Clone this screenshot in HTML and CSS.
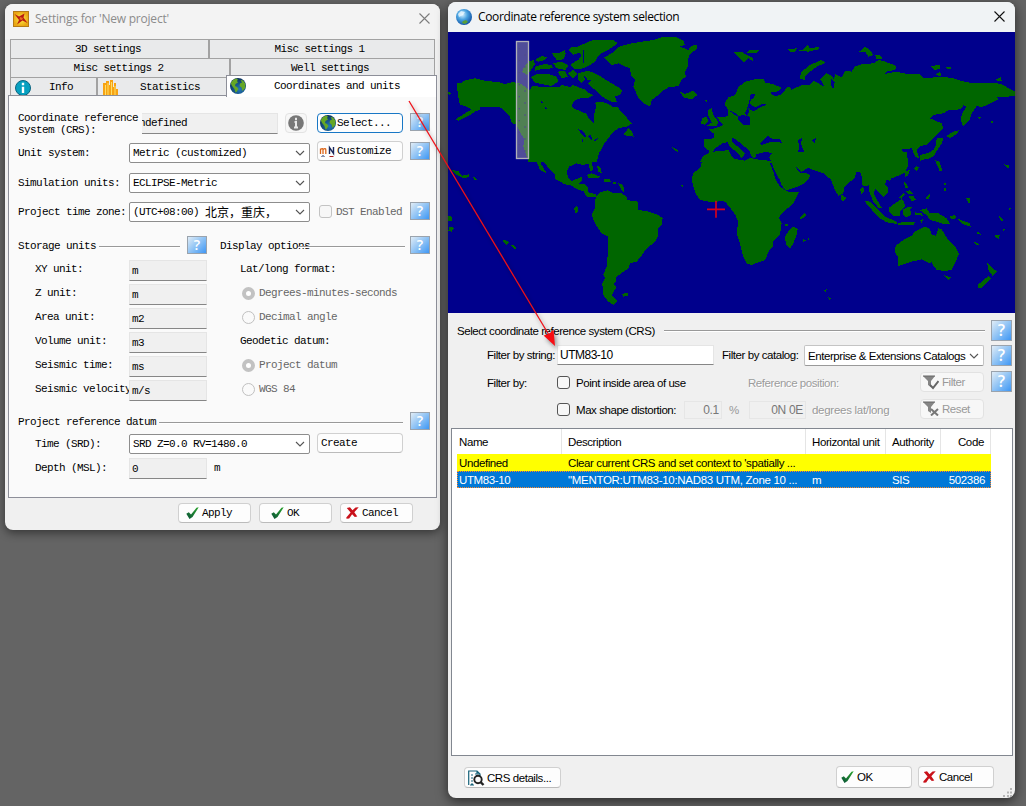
FILE: index.html
```html
<!DOCTYPE html>
<html lang="en">
<head>
<meta charset="utf-8">
<title>Coordinate settings</title>
<link rel="stylesheet" href="styles.css">
</head>
<body>
<svg class="defs" width="0" height="0">
  <defs>
    <radialGradient id="sea" cx=".6" cy=".7" r=".8"><stop offset="0" stop-color="#2479b8"/><stop offset="1" stop-color="#06264d"/></radialGradient>
    <linearGradient id="ok" x1="0" y1="1" x2="1" y2="0"><stop offset="0" stop-color="#0a5138"/><stop offset="1" stop-color="#2aa52c"/></linearGradient>
    <radialGradient id="sky" cx=".4" cy=".35" r=".7"><stop offset="0" stop-color="#d5f1ff"/><stop offset=".45" stop-color="#4aa3e0"/><stop offset="1" stop-color="#0a4ba0"/></radialGradient>
    <radialGradient id="gold"><stop offset="0" stop-color="#fff04a"/><stop offset="1" stop-color="#e9a512"/></radialGradient>
  </defs>
  <symbol id="globe" viewBox="0 0 16 16"><circle cx="8" cy="8" r="8" fill="url(#sea)"/><path d="M.8 5 3 2 6 .6 8 1.500 7 3 8 4.500 5.500 6 5 8 7 9 8.500 11 6.500 14 5.500 14.500 4.500 11 2.500 8.500 1.500 7ZM10.500 2 13 2.500 15.200 5.500 15.300 10 12.500 13 11.500 9.500 9.500 8 10 5.500 12 4.500Z" fill="#65a725"/></symbol>
  <symbol id="check" viewBox="0 0 13 12"><path d="M.3 6.800 2.800 5.300 5 7.500 10.500 .8 12.700 .3 6.500 10 3.500 11.900Z" fill="url(#ok)"/></symbol>
  <symbol id="cross" viewBox="0 0 13 12"><path d="M.8 1 4 .2 6.500 3.300 9.500 .5 12.700 .3 8.300 5.200 11.300 9.600 8.800 10 6.100 7.300 3.200 11.600 .5 11.800 .3 10.500 4.600 5.600Z" fill="#c9111a"/></symbol>
  <symbol id="chev" viewBox="0 0 10 6"><path d="M1 1 5 5 9 1" fill="none" stroke="#555" stroke-width="1.1"/></symbol>
  <symbol id="funnel" viewBox="0 0 16 15"><path d="M0 1H12L8 6V12L5 10V6Z" fill="#858585"/><path d="M0 1H12" stroke="#666"/></symbol>
</svg>

<section class="window settings">
  <header class="title">
    <svg width="16" height="16" viewBox="0 0 16 16"><rect x=".5" y=".5" width="15" height="15" fill="url(#gold)" stroke="#b67b16"/><path d="M1.500 3 6 5.500 11.500 2.500 10.500 6.500 14.500 12 9.500 9.500 4 13.500 6 9Z" fill="#b91b10"/><path d="M7 6 10 7 9 9 6.500 8.500Z" fill="#e66a20"/></svg>
    <span>Settings for 'New project'</span>
    <svg class="close" width="11" height="11" viewBox="0 0 11 11"><path d="M.5.5 10.500 10.500M10.500.5.5 10.500" stroke="#7c7c7c" stroke-width="1.100"/></svg>
  </header>

  <nav class="tabs">
    <div class="tabrow one"><span>3D settings</span><span>Misc settings 1</span></div>
    <div class="tabrow two"><span>Misc settings 2</span><span>Well settings</span></div>
    <div class="tabrow three">
      <div class="tab info"><svg width="16" height="16" viewBox="0 0 16 16"><circle cx="8" cy="8" r="7.500" fill="#07a0c0" stroke="#0a6480"/><path d="M8 2.700V5.300M8 6.800V13" stroke="#fff" stroke-width="2.400"/></svg><span>Info</span></div>
      <div class="tab stats"><svg width="16" height="16" viewBox="0 0 16 16"><path d="M0 3H3V1H6V5H7V0H10V7H11V3H13V9H15V16H0Z" fill="#f7a313"/><path d="M2.500 5V15M5 3V15M8.500 2V15M12 6V15" stroke="#ffdf64"/></svg><span>Statistics</span></div>
      <div class="tab active"><svg width="16" height="16"><use href="#globe"/></svg><span>Coordinates and units</span></div>
    </div>
  </nav>

  <main class="panel">
    <div class="line crs">
      <label>Coordinate reference<br>system (CRS):</label>
      <div class="field"><span>Undefined</span></div>
      <button class="infobtn" disabled><svg width="16" height="16" viewBox="0 0 16 16"><circle cx="8" cy="8" r="7.800" fill="#777"/><path d="M8 2.700V5.300M6.500 7H8V12M6 12.500H10" stroke="#e8e8e8" stroke-width="2" fill="none"/></svg></button>
      <button class="btn select"><svg width="16" height="16"><use href="#globe"/></svg>Select...</button>
      <i class="help">?</i>
    </div>
    <div class="line units">
      <label>Unit system:</label>
      <div class="combo">Metric (customized)<svg width="10" height="6"><use href="#chev"/></svg></div>
      <button class="btn customize"><svg width="16" height="12" viewBox="0 0 16 12"><path d="M1.500 9V3.500M1.500 4.500Q4 2.500 4 5V9M4 4.500Q6.800 2.500 6.800 5V9" stroke="#dc6518" stroke-width="1.300" fill="none"/><path d="M10.500 9V2.500L14.500 8.500V2" stroke="#19285c" stroke-width="1.400" fill="none"/><path d="M2.500 11.500Q4 10 5.500 11.500" stroke="#19285c" fill="none"/><path d="M10.500 11.500H14.500" stroke="#a81e1e"/></svg>Customize</button>
      <i class="help">?</i>
    </div>
    <div class="line sim">
      <label>Simulation units:</label>
      <div class="combo">ECLIPSE-Metric<svg width="10" height="6"><use href="#chev"/></svg></div>
    </div>
    <div class="line zone">
      <label>Project time zone:</label>
      <div class="combo">(UTC+08:00) <b>北京，重庆，</b><svg width="10" height="6"><use href="#chev"/></svg></div>
      <i class="box off"></i><span class="dst">DST Enabled</span>
      <i class="help">?</i>
    </div>

    <div class="groups">
      <section class="storage">
        <h2><span>Storage units</span><hr><i class="help">?</i></h2>
        <div class="unit"><label>XY unit:</label><div class="field">m</div></div>
        <div class="unit"><label>Z unit:</label><div class="field">m</div></div>
        <div class="unit"><label>Area unit:</label><div class="field">m2</div></div>
        <div class="unit"><label>Volume unit:</label><div class="field">m3</div></div>
        <div class="unit"><label>Seismic time:</label><div class="field">ms</div></div>
        <div class="unit"><label>Seismic velocity</label><div class="field">m/s</div></div>
      </section>
      <section class="display">
        <h2><span>Display options</span><hr><i class="help">?</i></h2>
        <p>Lat/long format:</p>
        <p class="opt"><i class="radio on"></i>Degrees-minutes-seconds</p>
        <p class="opt"><i class="radio"></i>Decimal angle</p>
        <p>Geodetic datum:</p>
        <p class="opt"><i class="radio on"></i>Project datum</p>
        <p class="opt"><i class="radio"></i>WGS 84</p>
      </section>
    </div>

    <section class="datum">
      <h2><span>Project reference datum</span><hr><i class="help">?</i></h2>
      <div class="line time"><label>Time (SRD):</label><div class="combo">SRD Z=0.0 RV=1480.0<svg width="10" height="6"><use href="#chev"/></svg></div><button class="btn create">Create</button></div>
      <div class="line depth"><label>Depth (MSL):</label><div class="field">0</div><span>m</span></div>
    </section>
  </main>

  <footer class="actions">
    <button class="btn"><svg width="13" height="12"><use href="#check"/></svg>Apply</button>
    <button class="btn"><svg width="13" height="12"><use href="#check"/></svg>OK</button>
    <button class="btn"><svg width="13" height="12"><use href="#cross"/></svg>Cancel</button>
  </footer>
</section>

<section class="window selection">
  <header class="title">
    <svg width="16" height="16" viewBox="0 0 16 16"><circle cx="8" cy="8" r="8" fill="url(#sky)"/><path d="M7 12 10 11 12 13 9 15 6 14Z" fill="#59a036"/><path d="M2 5 5 2 9 3 7 6 3 8Z" fill="#eefaff" opacity=".75"/></svg>
    <span>Coordinate reference system selection</span>
    <svg class="close" width="11" height="11" viewBox="0 0 11 11"><path d="M.5.5 10.500 10.500M10.500.5.5 10.500" stroke="#111" stroke-width="1.100"/></svg>
  </header>
  <svg class="map" width="567" height="281" viewBox="1344 96 1701 843">
    <g class="land" shape-rendering="crispEdges">
      <g transform="translate(1335 0)">
        <path d="M36 262 36 250 50 248 60 241 90 235 125 243 160 246 180 252 205 246 230 252 245 265 255 270 262 258 285 260 300 262 340 262 350 255 365 258 372 262 385 255 400 262 420 268 430 278 445 285 435 292 415 295 398 296 385 306 380 320 392 328 410 335 425 342 430 352 440 364 448 370 446 350 450 335 453 318 450 308 470 305 490 312 505 322 518 320 525 332 540 345 550 360 562 370 545 380 520 385 500 400 490 415 478 430 470 445 462 460 455 485 250 485 243 462 235 440 238 420 225 395 215 375 200 368 195 350 175 328 160 320 130 320 105 322 105 330 90 335 75 345 60 352 40 362 32 358 60 340 80 328 60 318 45 315 40 290Z"/>
        <path d="M258 232 275 222 310 222 335 230 340 245 320 258 290 252 270 248ZM245 225 232 215 235 205 250 185 265 180 270 192 258 210ZM270 200 300 192 320 195 325 205 290 207 270 212ZM270 180 290 168 305 172 300 180 280 185ZM320 160 340 160 360 150 362 162 355 178 335 180ZM325 190 350 185 370 195 362 210 335 205ZM338 215 360 212 368 230 350 235ZM370 150 378 142 395 142 430 125 445 120 505 120 518 130 490 150 470 160 455 175 450 185 430 198 405 208 385 205 375 195 385 188 400 180 410 165 400 158 385 165ZM368 220 385 210 398 222 385 235ZM400 220 430 212 460 225 480 238 500 250 520 262 532 272 525 285 510 290 515 305 500 305 480 295 465 285 455 272 440 262 430 250 440 240 420 240 410 248 400 240ZM535 405 550 385 560 395 567 410 550 408Z"/>
        <path d="M478 172 500 160 522 140 550 132 590 125 625 120 650 112 695 112 715 122 720 135 705 140 730 150 740 137 755 135 758 145 735 162 728 180 728 200 720 215 722 230 710 240 700 258 670 262 650 275 640 285 620 300 615 320 600 312 580 295 572 275 565 260 570 240 558 225 555 205 540 200 520 190 500 195 485 182Z"/>
        <path d="M705 275 720 282 745 272 757 285 740 298 715 292ZM778 300 787 300 785 308ZM790 330 800 325 805 345 820 365 815 378 785 378 800 368 795 355 788 345ZM772 355 785 350 790 362 780 375 768 370ZM870 288 845 298 838 312 850 330 870 335ZM790 388 810 385 835 375 815 352 840 352 870 335 870 430 850 425 835 430 820 445 800 455 785 448 778 440 778 418 805 415 808 402ZM682 442 700 450 700 456 690 452ZM775 468 790 460 830 452 870 450 870 485 765 485ZM9 275 20 280 12 287Z"/>
      </g>
      <g transform="translate(2190 0)">
        <path d="M-5 292 15 285 25 262 45 245 75 238 100 236 105 248 130 252 155 264 145 274 120 278 135 290 150 285 162 275 170 262 180 260 184 270 215 255 240 255 250 242 265 250 285 262 275 245 270 240 290 220 305 228 312 240 315 222 335 232 345 212 365 215 375 200 395 193 430 190 445 180 460 183 500 198 495 210 470 215 465 222 500 215 530 222 570 222 580 235 640 230 670 235 690 242 720 248 755 250 795 248 820 255 835 265 855 275 855 288 830 290 800 290 805 298 785 308 755 322 740 318 735 325 725 340 718 360 700 380 692 360 695 345 700 335 710 320 700 315 695 325 680 330 655 330 640 340 610 345 600 355 635 370 640 385 625 400 605 420 590 435 570 438 560 450 568 475 555 470 545 445 515 448 525 465 535 490 -5 490Z"/>
        <path d="M10 155 35 155 50 165 70 175 68 183 55 175 42 186 28 175ZM60 150 88 150 80 160 50 158ZM172 148 200 145 195 155 180 155ZM205 152 220 148 232 135 240 145 268 140 265 148 235 155ZM208 235 215 215 240 195 275 180 287 188 260 200 240 215 225 228 225 240ZM388 155 405 140 420 150 430 165 415 170 405 155ZM435 165 450 165 458 178 440 178ZM600 198 630 195 632 205 615 210ZM615 225 630 215 635 228ZM648 200 662 200 662 207 650 206ZM798 238 812 232 815 242 803 242ZM650 408 670 395 688 390 680 402 660 415ZM620 415 640 415 635 430 625 445 610 470 590 478 575 475 590 462 610 450 618 435ZM740 350 752 352 750 358ZM782 363 788 363 788 368 782 368Z"/>
      </g>
      <g transform="translate(1335 465)">
        <path d="M253 0 275 20 285 45 305 55 290 30 285 15 300 25 315 45 330 58 330 72 360 88 380 92 400 105 415 108 425 125 455 125 452 117 430 112 428 95 420 88 400 88 412 75 410 65 395 72 380 78 370 70 365 50 372 35 395 25 415 30 430 25 437 50 445 42 440 22 455 5 462 -12 250 -12Z"/>
        <path d="M452 125 465 112 488 106 505 115 530 115 545 125 545 135 578 140 580 165 605 168 640 180 653 190 650 210 638 220 640 240 630 260 600 285 595 295 575 320 555 325 550 340 515 365 512 380 505 388 515 395 500 420 517 438 505 450 490 440 475 420 472 385 480 370 475 358 485 335 488 300 490 245 470 235 450 205 440 180 450 160Z"/>
        <path d="M530 417 550 413 550 422 535 425ZM425 60 440 55 465 65 460 70 430 68ZM475 72 495 72 497 80 478 80ZM503 82 513 82 513 88 503 88ZM520 85 535 90 538 115 530 105ZM455 30 468 40 470 55 460 50ZM387 160 397 152 400 170 392 175ZM706 92 715 88 715 98ZM20 45 40 48 50 62 72 58 72 66 55 70 35 60ZM80 60 98 75 90 76ZM9 183 22 185 20 197 9 198ZM12 215 27 218 20 230 10 227ZM172 258 180 254 192 262 185 270ZM197 272 205 270 215 280 210 285Z"/>
      </g>
      <g transform="translate(2190 465)">
        <path d="M125 -10 530 -10 535 30 525 52 505 62 485 70 470 75 465 90 475 100 475 112 460 125 445 110 435 100 432 118 450 150 458 160 445 158 430 140 418 110 418 90 408 95 395 90 395 65 390 50 378 50 375 68 355 85 342 98 340 115 325 122 315 105 305 80 300 70 290 65 280 55 250 45 235 38 215 50 195 32 205 48 215 55 230 55 242 62 230 78 215 90 180 103 165 105 155 90 150 75 135 50 125 25Z"/>
        <path d="M-65 0-85 20-87 35-110 55-115 70-110 95-103 115-90 135-55 142-25 138-15 140 0 158 15 178 25 200 20 235 30 265 38 300 50 325 65 330 85 322 105 315 118 285 130 275 128 260 150 240 155 205 148 190 150 180 190 145 207 112 180 112 165 105 150 95 135 70 130 50 115 15 80 12 60 8 45 16 20 12 15 0-60-15Z"/>
        <path d="M335 118 350 130 340 140 333 132ZM168 270 165 245 175 230 190 215 203 222 200 240 190 265 180 280ZM208 190 225 173 228 182 215 192ZM165 206 175 206 175 213 165 213ZM218 252 228 256 220 262ZM232 248 238 248 235 256ZM403 138 420 140 440 160 465 185 500 200 500 207 470 202 450 190 430 170ZM505 203 555 200 550 210 505 210ZM477 158 495 145 515 132 522 140 525 155 510 170 510 182 490 182 478 172ZM518 165 535 155 550 155 540 165 545 178 530 187 520 180ZM522 80 532 90 535 100 525 100ZM535 122 550 122 558 135 545 138ZM508 128 520 115 524 118 514 132ZM527 108 540 106 550 116 535 118ZM525 50 540 45 535 60 525 68ZM553 40 560 34 567 38 560 48ZM570 0 610 -10 600 8 570 18ZM615 15 628 20 637 45 630 50ZM568 165 590 160 600 175 625 175 650 190 662 208 645 208 620 200 600 195 590 180ZM555 172 575 175 578 182 555 180ZM570 195 580 193 575 205ZM658 185 675 180 680 190 665 192ZM680 190 720 205 722 215 700 208ZM470 70 483 68 480 80ZM390 105 400 95 403 110 395 118Z"/>
        <path d="M495 290 497 272 520 255 545 242 555 230 585 215 600 222 605 238 618 242 625 220 635 222 645 240 655 255 675 275 687 295 675 325 665 345 645 348 620 345 605 325 610 318 600 325 575 313 545 320 505 333 503 305ZM640 360 662 367 655 376ZM772 325 790 342 802 348 788 363 775 345ZM775 363 785 370 770 385 755 398 745 398 745 388ZM585 130 600 115 598 132ZM708 130 720 130 718 150ZM835 158 843 158 840 168ZM805 185 810 183 820 195 815 200ZM792 242 810 240 805 252ZM740 235 745 230 755 240ZM730 258 748 268 740 272ZM822 28 838 32 835 40ZM280 405 290 403 288 411ZM292 425 303 430 300 436ZM643 83 648 83 648 90 643 90ZM643 100 648 100 648 107 643 107ZM817 222 825 222 822 230Z"/>
      </g>
      <g class="water">
        <path transform="translate(1335 0)" d="M400 388 410 390 425 408 422 412 408 402ZM411 410 415 425 411 425ZM428 408 438 405 443 420 436 418ZM445 422 460 412 460 417 448 424ZM288 303 296 307 290 309ZM300 322 310 324 302 327ZM414 150 418 150 418 190 414 190ZM417 225 427 238 420 240ZM435 262 452 275 445 280Z"/>
        <path transform="translate(2190 0)" d="M24 350 38 345 60 350 60 376 40 375 26 362ZM-5 330 15 345 24 350 22 342ZM62 283 75 282 72 292 62 300 60 312 75 322 95 312 112 314 95 320 70 334 55 325 58 335 50 350 45 340 55 315ZM90 430 115 407 128 418 150 418 155 428 125 425 95 435ZM203 420 217 414 212 430 222 455 205 455 208 435ZM245 422 258 413 254 430ZM302 235 314 245 312 265 305 262ZM-45 445-20 428-5 432 5 445 20 455 35 475 45 460 30 445 5 425 8 412 30 428 58 452 65 470 75 475 80 462 110 455 125 460 118 472 122 482 115 482 80 478 60 474 45 482 15 477 5 468-5 450-50 455Z"/>
      </g>
    </g>
    <path class="mesh" d="M1558 144V450M1575 163V465"/>
    <rect class="zonebar" x="1549.500" y="124.500" width="36" height="351"/>
    <path class="target" d="M2121 628H2175M2148 602V653"/>
  </svg>

  <div class="filters">
    <div class="frow head"><span>Select coordinate reference system (CRS)</span><hr><i class="help">?</i></div>
    <div class="frow string"><label>Filter by string:</label><div class="field">UTM83-10</div><label class="cat">Filter by catalog:</label><div class="combo">Enterprise &amp; Extensions Catalogs<svg width="10" height="6"><use href="#chev"/></svg></div><i class="help">?</i></div>
    <div class="frow area"><label>Filter by:</label><i class="box"></i><span class="name">Point inside area of use</span><span class="pos">Reference position:</span><button class="btn off"><svg width="16" height="15" viewBox="0 0 16 15"><use href="#funnel"/><path d="M7 10 10 13 15.500 6" fill="none" stroke="#666" stroke-width="2"/></svg>Filter</button><i class="help">?</i></div>
    <div class="frow shape"><i class="box"></i><span class="name">Max shape distortion:</span><div class="field dist">0.1</div><span class="pct">%</span><div class="field where">0N 0E</div><span class="deg">degrees lat/long</span><button class="btn off"><svg width="16" height="15" viewBox="0 0 16 15"><use href="#funnel"/><path d="M8 8 15 14.500M15 8 8 14.500" stroke="#777" stroke-width="2"/></svg>Reset</button></div>
  </div>

  <div class="list">
    <div class="cols names"><span>Name</span><span>Description</span><span>Horizontal unit</span><span>Authority</span><span>Code</span></div>
    <div class="cols undef"><span>Undefined</span><span>Clear current CRS and set context to 'spatially ...</span><span></span><span></span><span></span></div>
    <div class="cols picked"><span>UTM83-10</span><span>"MENTOR:UTM83-10:NAD83 UTM, Zone 10 ...</span><span>m</span><span>SIS</span><span>502386</span></div>
  </div>

  <footer class="bottom">
    <button class="btn details"><svg width="17" height="16" viewBox="0 0 17 16"><path d="M.7 15V1H9L12 4V6M3 5H5M3 8H5M3 11H5M3 14H5M7 4H9M9 1V4H12M2 15H6" fill="none" stroke="#17637a" stroke-width="1.200"/><circle cx="10" cy="9.500" r="3.700" fill="#f9f9f9" stroke="#222" stroke-width="1.900"/><path d="M12.500 12 15.500 15" stroke="#222" stroke-width="2.400"/></svg>CRS details...</button>
    <button class="btn ok"><svg width="13" height="12"><use href="#check"/></svg>OK</button>
    <button class="btn cancel"><svg width="13" height="12"><use href="#cross"/></svg>Cancel</button>
    <svg class="grip" width="10" height="10" viewBox="0 0 10 10"><path d="M7 0H9V2H7ZM4 3.500H6V5.500H4ZM7 3.500H9V5.500H7ZM0 7H2V9H0ZM4 7H6V9H4ZM7 7H9V9H7Z" fill="#b5b5b5"/></svg>
  </footer>
</section>

<svg class="arrow" width="160" height="256" viewBox="402 96 160 256"><path d="M409 101 549 335" stroke="#f01018" stroke-width="1.300"/><path d="M555 346 543.500 335.500 549 334 553.500 329.500Z" fill="#f80c12"/></svg>
</body>
</html>
```
FILE: styles.css
```css
* { box-sizing: border-box; }
body { margin: 0; width: 1026px; height: 806px; overflow: hidden; position: relative; background: #646464; font: 11.5px/14px "Liberation Sans", sans-serif; letter-spacing: -.44px; color: #000; }
.defs { position: absolute; }
svg { display: block; flex: none; }
h2, p { margin: 0; font: inherit; }
hr { flex: 1; height: 2px; margin: 0; border: 0; border-top: 1px solid #999; border-bottom: 1px solid #fff; }
button { font: inherit; color: inherit; letter-spacing: inherit; padding: 0; margin: 0; }
span, label { white-space: pre; flex: none; }
.window { position: absolute; display: flex; flex-direction: column; overflow: hidden; border-radius: 8px; background: #f0f0f0; }
.title { display: flex; align-items: center; font: 12px/16px "Open Sans", "Noto Sans", sans-serif; }
.title .close { margin-left: auto; }

.btn { display: flex; align-items: center; flex: none; background: #fdfdfd; border: 1px solid #d0d0d0; border-bottom-color: #bbb; border-radius: 4px; white-space: nowrap; }
.help { flex: none; width: 20px; height: 18px; border: 1px solid #9aa3ad; background: linear-gradient(135deg, #d8e8f6 5%, #8fc3f5 50%, #3f97f5); color: #fff; font: 600 14px/15px "Open Sans", sans-serif; letter-spacing: 0; text-align: center; }
.field { flex: none; overflow: hidden; white-space: pre; background: #f0f0f0; border: 1px solid #e5e5e5; border-bottom-color: #868686; }
.combo { display: flex; align-items: center; flex: none; background: #fff; border: 1px solid #8d8d8d; border-radius: 2px; white-space: pre; }
.combo svg { margin-left: auto; }
.box { flex: none; width: 13px; height: 13px; border: 1px solid #555; border-radius: 3px; background: #f7f7f7; }
.box.off { border-color: #c3c3c3; }

.settings { left: 5px; top: 4px; width: 435px; height: 526px; box-shadow: 0 3px 10px #0007; font: 11px/12px "Liberation Mono", "Noto Sans CJK SC", monospace; letter-spacing: -.6px; }
.settings .title { height: 35px; flex: none; padding: 0 10px 6px 8px; background: #f3f3f3; color: #8c8c8c; letter-spacing: -.22px; gap: 6px; }
.tabs { flex: none; width: 425px; margin-left: 5px; }
.tabrow { display: grid; height: 19px; border: 1px solid #a2a2a2; border-bottom: 0; background: #e9eaeb; line-height: 19px; text-align: center; }
.tabrow.one { grid-template-columns: 197px 1fr; }
.tabrow.two { grid-template-columns: 218px 1fr; }
.tabrow.one span + span, .tabrow.two span + span { border-left: 2px solid #a2a2a2; }
.tabrow.one span:first-child { padding-right: 3px; }
.tabrow.one span + span { padding-right: 5px; }
.tabrow.two span:first-child { padding-right: 3px; }
.tabrow.two span + span { padding-right: 5px; }
.tabrow.three { grid-template-columns: 87px 128px 211px; border-right: 0; }
.tab { display: flex; align-items: center; }
.tab.info { padding-left: 4px; gap: 18px; border-right: 2px solid #a2a2a2; }
.tab.stats { padding-left: 5px; gap: 21px; }
.tab.active { height: 22px; margin-top: -3px; padding-left: 3px; gap: 28px; background: #fff; border: 1px solid #8d8f99; border-bottom: 0; padding-bottom: 1px; z-index: 1; }

.panel { flex: none; width: 429px; height: 403px; margin: -1px 0 0 3px; padding: 17px 6px 0 9px; background: #fafafa; border: 1px solid #8d8f99; display: flex; flex-direction: column; }
.line { display: flex; align-items: flex-start; height: 30px; flex: none; }
.line label { width: 111px; padding-top: 4px; }
.line .help { margin-left: auto; }
.crs label { width: 124px; padding-top: 0; margin-top: -1px; }
.crs .field { width: 136px; height: 21px; border-left: 0; }
.crs .field span { display: block; margin-left: -9px; line-height: 19px; }
.infobtn { width: 22px; height: 20px; margin-left: 7px; padding: 1px 2px; border: 1px solid #e3e3e3; border-radius: 4px; background: #f7f7f7; }
.crs .infobtn, .crs .select { margin-top: -.5px; }
.select { width: 86px; height: 20px; margin-left: 10px; border-color: #1877c5; padding-left: 2px; gap: 1px; }
.panel .combo { width: 181px; height: 20px; padding: 0 4px 0 3px; }
.units .btn { width: 86px; height: 20px; margin: -2px 0 0 7px; padding-left: 1px; gap: 2px; }
.units .help { margin-top: -1px; }
.sim { height: 29px; }
.zone { height: 34px; }
.zone .box { margin: 3px 4px 0 9px; }
.zone .dst { padding-top: 4px; color: #666; }
.combo b { font: 12px/16px "Noto Sans CJK SC", sans-serif; letter-spacing: 0; }
.groups { display: flex; height: 176px; gap: 13px; flex: none; }
.storage { width: 189px; }
.display { width: 210px; }
.panel h2 { display: flex; align-items: center; height: 20px; }
.panel h2 hr { margin: 2px 7px 0 3px; }
.panel h2 .help { margin-top: -2px; }
.display h2 hr { margin: 2px 5px 0 -12px; }
.unit { display: flex; height: 24px; padding-left: 17px; }
.unit:nth-child(2) { margin-top: 4px; }
.unit label { width: 94px; overflow: hidden; padding-top: 3px; }
.unit .field, .depth .field { width: 78px; height: 21px; padding: 4px 2px; }
.display p { height: 24px; padding: 3px 0 0 20px; white-space: nowrap; }
.display h2 + p { margin-top: 4px; }
.display .opt { display: flex; align-items: center; padding: 0 0 6px 22px; gap: 4px; color: #666; }
.radio { width: 13px; height: 13px; border: 1px solid #c0c0c0; border-radius: 50%; }
.radio.on { border: 4px solid #c2c2c2; background: #fff; }
.datum h2 hr { margin-right: 7px; }
.time { height: 25px; padding: 1px 0 0 17px; margin-top: 1px; }
.time label, .depth label { width: 94px; }
.create { width: 86px; height: 20px; margin: -1px 0 0 7px; padding-left: 3px; }
.depth { padding-left: 17px; }
.depth span { padding: 4px 0 0 7px; }
.actions { display: flex; gap: 8px; padding: 5px 0 0 173px; }
.actions .btn { width: 73px; height: 20px; padding-left: 7px; gap: 3px; }
.actions .btn:nth-child(2) { padding-left: 11px; }
.actions .btn:nth-child(3) { padding-left: 5px; }

.selection { left: 448px; top: 2px; width: 567px; height: 796px; box-shadow: 0 3px 12px #0009; }
.selection .title { height: 30px; flex: none; background: #f0f3f5; padding: 0 10px 1px 8px; gap: 6px; letter-spacing: -.37px; }
.map { background: #00008c; }
.land { fill: #060; }
.water { fill: #00008c; }
.zonebar { fill: #a09aa580; stroke: #b0b0b8; stroke-width: 4; }
.mesh { stroke: #00006b; stroke-width: 4; stroke-dasharray: 4 32; fill: none; }
.target { stroke: #d8001b; stroke-width: 5; }
.filters { flex: none; height: 115px; padding: 7px 3px 0 9px; }
.frow { display: flex; align-items: center; height: 21px; }
.selection .help { width: 21px; height: 21px; line-height: 18px; font-size: 16px; }
.head hr { margin: 0 6px 0 9px; }
.string { margin-top: 4px; }
.string label { width: 100px; padding: 0 0 1px 30px; }
.string .field { width: 157px; height: 20px; margin-top: -1px; background: #fff; padding: 2px 2px; line-height: 15px; font-size: 12px; letter-spacing: -.5px; }
.string .cat { width: 82px; padding: 0 0 1px; margin-left: 8px; }
.string .combo { width: 180px; height: 21px; padding: 0 4px 0 3px; border-color: #c4c4c4; border-bottom-color: #999; }
.string .help { margin-left: 7px; }
.area { margin-top: 6px; height: 22px; }
.area label { width: 100px; padding-left: 30px; }
.frow .box { margin-top: -1px; }
.name { margin-left: 6px; width: 172px; }
.pos { width: 172px; color: #9c9c9c; text-shadow: 1px 1px #fff; }
.area .help { margin-left: 7px; margin-top: -3px; }
.filters .btn { width: 64px; height: 20px; padding-left: 2px; gap: 3px; color: #999; background: #f7f7f7; border-color: #e2e2e2; margin-top: -2px; }
.shape { margin-top: 5px; padding-left: 100px; }
.shape .name { width: 108px; }
.shape .field { height: 18px; text-align: right; padding: 1px 2px; border: 1px solid #e6e6e6; color: #777; font-size: 12px; letter-spacing: -.3px; }
.dist { width: 38px; }
.pct { width: 27px; padding-left: 7px; color: #999; }
.where { width: 57px; }
.deg { width: 114px; padding-left: 6px; color: #999; text-shadow: 1px 1px #fff; letter-spacing: -.28px; }
.list { flex: none; width: 562px; height: 328px; margin-left: 3px; border: 1px solid #828790; background: #fff; padding: 0 20px 0 5px; }
.cols { display: grid; grid-template-columns: 105px 244px 80px 55px 50px; height: 17px; align-items: center; width: 534px; }
.cols span { padding-left: 6px; letter-spacing: -.4px; overflow: hidden; }
.cols span:first-child { padding-left: 2px; letter-spacing: -.4px; }
.cols span:last-child { text-align: right; padding: 0 6px 0 0; letter-spacing: -.35px; }
.names { height: 25px; }
.names span { border-right: 1px solid #e5e5e5; line-height: 25px; height: 25px; }
.names span, .names span:last-child { padding-top: 1px; }
.picked span:nth-child(2) { letter-spacing: -.3px; }
.undef { background: #ff0; }
.picked { background: #0078d7; color: #fff; outline: 1px dotted #ff8728; outline-offset: -1px; }
.bottom { display: flex; align-items: flex-start; padding: 10px 2px 0 16px; }
.bottom .btn { width: 76px; height: 22px; padding-left: 4px; gap: 3px; }
.bottom .details { width: 97px; height: 21px; margin: 1px auto 0 0; padding-left: 3px; gap: 2px; }
.bottom .cancel { margin-left: 6px; }
.grip { margin: 22px 0 0 9px; }
.arrow { position: absolute; left: 402px; top: 96px; overflow: visible; filter: drop-shadow(2px 3px 2px #0006); }
```
